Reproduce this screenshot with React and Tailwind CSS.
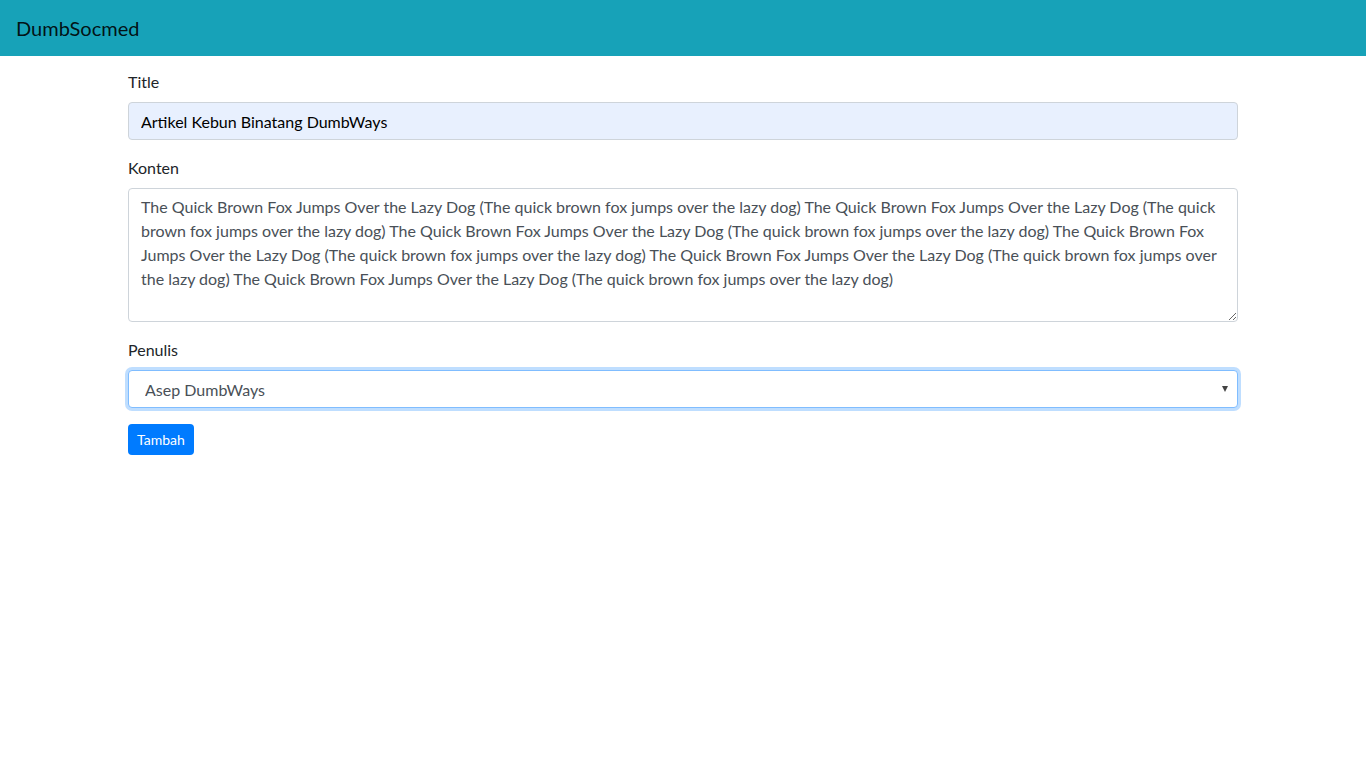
export default function App() {
  const konten =
    "The Quick Brown Fox Jumps Over the Lazy Dog (The quick brown fox jumps over the lazy dog) The Quick Brown Fox Jumps Over the Lazy Dog (The quick brown fox jumps over the lazy dog) The Quick Brown Fox Jumps Over the Lazy Dog (The quick brown fox jumps over the lazy dog) The Quick Brown Fox Jumps Over the Lazy Dog (The quick brown fox jumps over the lazy dog) The Quick Brown Fox Jumps Over the Lazy Dog (The quick brown fox jumps over the lazy dog) The Quick Brown Fox Jumps Over the Lazy Dog (The quick brown fox jumps over the lazy dog)";

  return (
    <div className="min-h-screen bg-white text-[#212529] font-['Lato','Noto_Sans',sans-serif] text-base">
      {/* Navbar */}
      <nav className="h-14 bg-[#17a2b8] flex items-center px-4">
        <span className="text-xl text-black/90">DumbSocmed</span>
      </nav>

      {/* Form */}
      <div className="max-w-[1140px] mx-auto px-[15px] pt-[14px]">
        <div className="mb-4">
          <label className="block mb-2 leading-6">Title</label>
          <input
            defaultValue="Artikel Kebun Binatang DumbWays"
            className="block w-full h-[38px] px-3 rounded border border-[#ced4da] bg-[#e8f0fe] text-black outline-none"
          />
        </div>

        <div className="mb-4">
          <label className="block mb-2 leading-6">Konten</label>
          <textarea
            rows={5}
            defaultValue={konten}
            className="block w-full h-[134px] px-3 py-1.5 leading-6 rounded border border-[#ced4da] text-[#495057] outline-none resize-y"
          />
        </div>

        <div className="mb-4">
          <label className="block mb-2 leading-6">Penulis</label>
          <div className="relative">
            <select
              defaultValue="asep"
              className="block w-full h-[38px] pl-4 pr-8 pt-px rounded border border-[#80bdff] shadow-[0_0_0_3px_rgba(0,123,255,0.25)] text-[#495057] bg-white appearance-none outline-none"
            >
              <option value="asep">Asep DumbWays</option>
            </select>
            <span className="pointer-events-none absolute right-[10px] top-1/2 -translate-y-1/2 w-0 h-0 border-l-[3.5px] border-r-[3.5px] border-t-[6px] border-l-transparent border-r-transparent border-t-[#444]" />
          </div>
        </div>

        <button className="h-[31px] px-[9px] rounded bg-[#007bff] text-white text-sm leading-5">
          Tambah
        </button>
      </div>
    </div>
  );
}
